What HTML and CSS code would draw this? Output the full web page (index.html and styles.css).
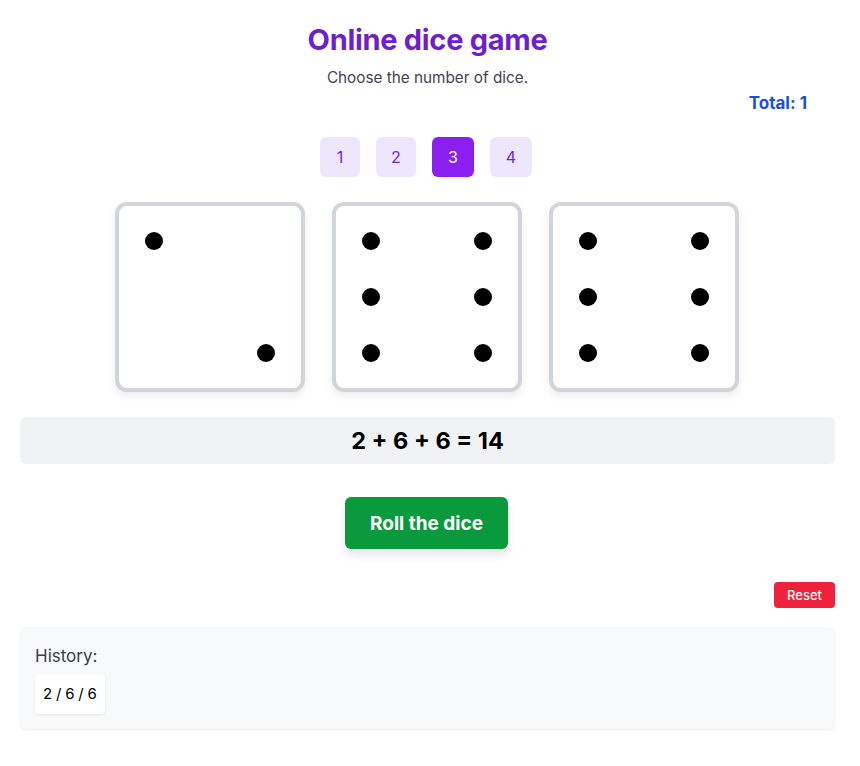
FILE: index.html
```html
<!DOCTYPE html>
<html lang="en">
  <head>
    <meta charset="UTF-8" />
    <meta name="viewport" content="width=device-width, initial-scale=1.0" />
    <title>Online dice game</title>
    <link rel="stylesheet" href="styles.css">
  </head>
  <body>
    <div class="game">
      <h1 class="title">Online dice game</h1>
      <p class="subtitle">Choose the number of dice.</p>
      <div class="total">Total: 1</div>

      <!-- dice count picker -->
      <div class="picker">
        <button class="pick">1</button>
        <button class="pick">2</button>
        <button class="pick active">3</button>
        <button class="pick wide">4</button>
      </div>

      <div class="dice">
        <div class="die">
          <span class="pip tl"></span>
          <span class="pip br"></span>
        </div>
        <div class="die">
          <span class="pip tl"></span>
          <span class="pip tr"></span>
          <span class="pip ml"></span>
          <span class="pip mr"></span>
          <span class="pip bl"></span>
          <span class="pip br"></span>
        </div>
        <div class="die">
          <span class="pip tl"></span>
          <span class="pip tr"></span>
          <span class="pip ml"></span>
          <span class="pip mr"></span>
          <span class="pip bl"></span>
          <span class="pip br"></span>
        </div>
      </div>

      <div class="sum">2 + 6 + 6 = 14</div>

      <div class="roll-row">
        <button class="roll">Roll the dice</button>
      </div>

      <div class="reset-row">
        <button class="reset">Reset</button>
      </div>

      <div class="history">
        <div class="history-label">History:</div>
        <div class="history-list">
          <span class="chip">2 / 6 / 6</span>
        </div>
      </div>
    </div>
  </body>
</html>
```

FILE: styles.css
```css
/* Page */
body {
  margin: 0;
  font-family: Inter, "Noto Sans", sans-serif;
  background-color: #fff;
  color: #111;
}

.game {
  width: 815px;
  margin-left: 20px;
  padding-top: 22px;
  padding-bottom: 30px;
}

.title {
  margin: 0;
  text-align: center;
  font-size: 29px;
  font-weight: 700;
  line-height: 36px;
  color: #6d1fd0;
  letter-spacing: -0.3px;
}

.subtitle {
  margin: 8px 0 0;
  text-align: center;
  font-size: 15.3px;
  line-height: 24px;
  color: #3f4450;
}

.total {
  text-align: right;
  padding-right: 28px;
  margin-top: 1px;
  font-size: 17px;
  font-weight: 700;
  line-height: 24px;
  color: #1d4ed8;
}

/* Dice count buttons */
.picker {
  display: flex;
  justify-content: center;
  gap: 16px;
  margin-top: 22px;
  padding-right: 3px;
}

.pick {
  width: 40px;
  height: 40px;
  border: none;
  border-radius: 6px;
  background-color: #ede6fd;
  color: #6d28d9;
  font-family: inherit;
  font-size: 16px;
}

.pick.wide {
  width: 42px;
}

.pick.active {
  width: 42px;
  background-color: #8a1ff0;
  color: #fff;
}

/* Dice */
.dice {
  display: flex;
  justify-content: center;
  gap: 27px;
  margin-top: 25px;
  padding-right: 2px;
}

.die {
  box-sizing: border-box;
  width: 190px;
  height: 190px;
  padding: 7px;
  border: 4px solid #d1d4d8;
  border-radius: 12px;
  background-color: #fff;
  box-shadow: 0 4px 8px rgba(0, 0, 0, 0.08);
  display: grid;
  grid-template-columns: repeat(3, 56px);
  grid-template-rows: repeat(3, 56px);
  place-items: center;
}

.pip {
  width: 18px;
  height: 18px;
  border-radius: 50%;
  background-color: #000;
}

.tl { grid-area: 1 / 1; }
.tr { grid-area: 1 / 3; }
.ml { grid-area: 2 / 1; }
.mr { grid-area: 2 / 3; }
.bl { grid-area: 3 / 1; }
.br { grid-area: 3 / 3; }

/* Sum line */
.sum {
  margin-top: 25px;
  height: 47px;
  line-height: 47px;
  background-color: #f1f2f4;
  border-radius: 6px;
  text-align: center;
  font-size: 23.5px;
  font-weight: 700;
  color: #000;
}

.roll-row {
  display: flex;
  justify-content: center;
  margin-top: 33px;
  padding-right: 2px;
}

.roll {
  width: 163px;
  height: 52px;
  border: none;
  border-radius: 6px;
  background-color: #0a9a3e;
  color: #fff;
  font-family: inherit;
  font-size: 19px;
  font-weight: 700;
  box-shadow: 0 6px 10px rgba(0, 0, 0, 0.1);
}

.reset-row {
  display: flex;
  justify-content: flex-end;
  margin-top: 33px;
}

.reset {
  width: 61px;
  height: 26px;
  border: none;
  border-radius: 4px;
  background-color: #f0213a;
  color: #fff;
  font-family: inherit;
  font-size: 13px;
  font-weight: 500;
}

/* History */
.history {
  margin-top: 19px;
  height: 102px;
  box-sizing: border-box;
  padding: 18px 15px;
  background-color: #f8f9fa;
  border-radius: 6px;
  box-shadow: 0 1px 2px rgba(0, 0, 0, 0.08);
}

.history-label {
  font-size: 17px;
  line-height: 22px;
  color: #3a3f4a;
}

.history-list {
  margin-top: 7px;
  display: flex;
  gap: 8px;
}

.chip {
  padding: 0 8px;
  height: 40px;
  line-height: 40px;
  background-color: #fff;
  border-radius: 4px;
  box-shadow: 0 1px 3px rgba(0, 0, 0, 0.08);
  font-size: 15px;
  letter-spacing: -0.2px;
  color: #000;
}
```
